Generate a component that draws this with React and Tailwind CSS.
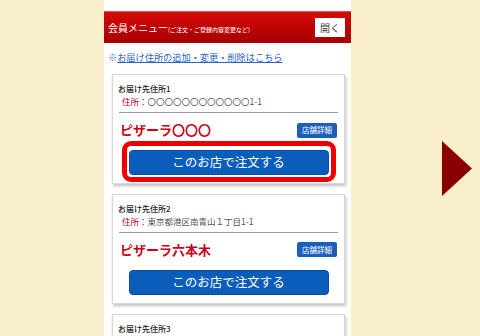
import React from 'react';

const FONT = { fontFamily: '"Noto Sans CJK JP", "Noto Sans", sans-serif' };

const AddressCard = ({ label, address, shop, highlight }) => (
    <div className="w-[233px] ml-2 bg-white border border-[#d9d9d9] shadow-[1px_2px_3px_rgba(0,0,0,0.25)] px-[5px] pt-[7px] pb-[8px]">
        <div className="text-[8px] leading-[13px] text-[#222] font-medium">{label}</div>
        {address && (
            <>
                <div className="text-[8.5px] leading-[13px] pl-[4px] text-[#555]">
                    <span className="text-[#c00018]">住所：</span>{address}
                </div>
                <div className="mx-[1px] mt-[4px] h-px bg-[#9a9a9a]" />
                <div className="flex items-center justify-between pl-[2px] pr-[2px] mt-[8px]">
                    <span className="text-[13px] leading-[18px] font-bold text-[#c8001a]">{shop}</span>
                    <span className="w-[40px] h-[15px] rounded-[2px] bg-[#1c5fb9] text-white text-[7.5px] flex items-center justify-center">店舗詳細</span>
                </div>
                <div className="flex justify-center mt-[9px]">
                    <div className="relative">
                        {highlight && (
                            <div className="absolute -inset-[7px] rounded-[9px] border-[5px] border-[#ee0000]" />
                        )}
                        <button className="relative w-[200px] h-[25px] rounded-[4px] bg-[#0b5dbb] border border-[#094c9c] text-white text-[12.5px] leading-none">
                            このお店で注文する
                        </button>
                    </div>
                </div>
            </>
        )}
        {!address && <div className="h-[80px]" />}
    </div>
);

export default function App() {
    return (
        <div className="w-[480px] h-[336px] overflow-hidden bg-[#faefcb] flex" style={FONT}>
            <div className="ml-[104px] w-[247px] h-full bg-white pt-[11px]">
                {/* Member menu bar */}
                <div className="h-[32px] flex items-center justify-between pl-[4px] pr-[6px] border-t border-[#e65050] bg-gradient-to-b from-[#d60a0a] to-[#a60000]">
                    <div className="text-white flex items-baseline">
                        <span className="text-[10px]">会員メニュー</span>
                        <span className="text-[6px]">(ご注文・ご登録内容変更など)</span>
                    </div>
                    <div className="w-[30px] h-[19px] bg-white flex items-center justify-center text-[10px] text-[#444]">開く</div>
                </div>

                <div className="pl-[4px] pt-[8px] pb-[10px] text-[9.2px] leading-[13px]">
                    <span className="text-[#3b6fd0]">※</span>
                    <span className="text-[#2a63c9] underline">お届け住所の追加・変更・削除はこちら</span>
                </div>

                <div className="flex flex-col gap-[10px]">
                    <AddressCard label="お届け先住所1" address="〇〇〇〇〇〇〇〇〇〇〇〇1-1" shop="ピザーラ〇〇〇" highlight />
                    <AddressCard label="お届け先住所2" address="東京都港区南青山１丁目1-1" shop="ピザーラ六本木" />
                    <AddressCard label="お届け先住所3" />
                </div>
            </div>

            <div className="ml-[91px] mt-[141px]">
                <svg width="30" height="55" viewBox="0 0 30 55">
                    <polygon points="0,0 30,27.5 0,55" fill="#8a0000" />
                </svg>
            </div>
        </div>
    );
}
